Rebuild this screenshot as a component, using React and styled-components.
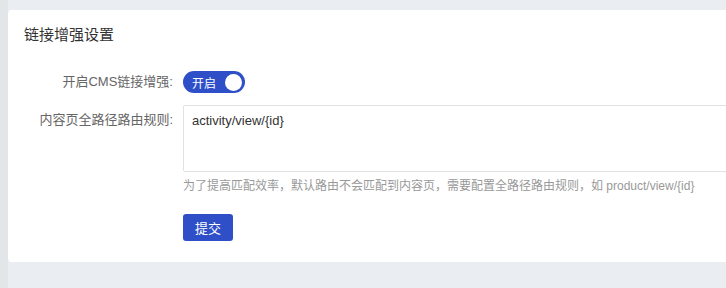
import React from 'react';
import styled, { createGlobalStyle } from 'styled-components';

const blue = '#2f4fc8';

const Global = createGlobalStyle`
  html, body {
    margin: 0;
    padding: 0;
    background: #eaedf1;
    font-family: "Liberation Sans", "Noto Sans CJK SC", sans-serif;
  }
`;

const Page = styled.div`
  width: 726px;
  height: 288px;
  overflow: hidden;
  padding: 10px 0 0 8px;
  box-sizing: border-box;
  background: linear-gradient(to right, #e3e6e9 0, #e3e6e9 8px, #eaedf1 8px);
`;

const Card = styled.section`
  width: 760px;
  height: 252px;
  background: #fff;
  border-radius: 4px;
  box-sizing: border-box;
  padding: 16px 0 0 0;
`;

const Title = styled.h2`
  margin: 0 0 27px 16px;
  font-size: 15px;
  font-weight: normal;
  color: #333;
  line-height: 18px;
`;

const Row = styled.div`
  display: flex;
  align-items: ${props => (props.top ? 'flex-start' : 'center')};
  margin-bottom: ${props => props.gap || 0}px;
`;

const Label = styled.label`
  width: 175px;
  padding-right: 10px;
  box-sizing: border-box;
  text-align: right;
  font-size: 13px;
  color: #666;
  line-height: 20px;
  padding-top: ${props => props.pt || 0}px;
`;

const Field = styled.div`
  display: flex;
  flex-direction: column;
  align-items: flex-start;
`;

const Switch = styled.div`
  width: 62px;
  height: 22px;
  border-radius: 11px;
  background: ${blue};
  display: flex;
  align-items: center;
  justify-content: space-between;
  padding: 0 3px 0 9px;
  box-sizing: border-box;
  color: #fff;
  font-size: 12px;
`;

const Knob = styled.span`
  width: 17px;
  height: 17px;
  border-radius: 50%;
  background: #fff;
`;

const TextArea = styled.textarea`
  width: 585px;
  height: 67px;
  border: 1px solid #e2e2e2;
  border-radius: 2px;
  padding: 6px 8px;
  box-sizing: border-box;
  font-family: "Liberation Sans", "Noto Sans CJK SC", sans-serif;
  font-size: 13px;
  color: #333;
  line-height: 18px;
  resize: none;
  outline: none;
`;

const Help = styled.div`
  margin-top: 6px;
  font-size: 12px;
  color: #999;
  line-height: 16px;
`;

const Button = styled.button`
  margin-top: 20px;
  width: 50px;
  height: 27px;
  border: none;
  border-radius: 3px;
  background: ${blue};
  color: #fff;
  font-size: 13px;
  font-family: "Liberation Sans", "Noto Sans CJK SC", sans-serif;
  padding: 0;
`;

export default function App() {
  return (
    <>
      <Global />
      <Page>
        <Card>
          <Title>链接增强设置</Title>
          <Row gap={12}>
            <Label>开启CMS链接增强:</Label>
            <Switch>
              开启
              <Knob />
            </Switch>
          </Row>
          <Row top>
            <Label pt={5}>内容页全路径路由规则:</Label>
            <Field>
              <TextArea defaultValue="activity/view/{id}" />
              <Help>为了提高匹配效率，默认路由不会匹配到内容页，需要配置全路径路由规则，如 product/view/{'{id}'}</Help>
              <Button>提交</Button>
            </Field>
          </Row>
        </Card>
      </Page>
    </>
  );
}
